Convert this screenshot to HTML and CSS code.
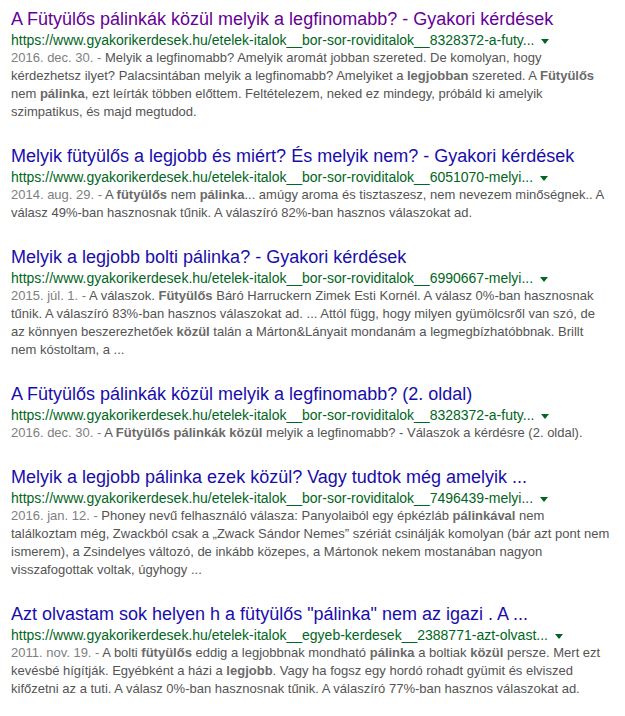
FILE: index.html
```
<html>
<head>
	<title>fütyülős pálinka - Keresés</title>
	<meta charset="utf-8">
	<link rel="stylesheet" href="styles.css">
</head>
<body>
<div id="results">

<div class="result">
	<h3 class="r"><a href="#" class="visited">A Fütyülős pálinkák közül melyik a legfinomabb? - Gyakori kérdések</a></h3>
	<div class="url-line"><cite>https://www.gyakorikerdesek.hu/etelek-italok__bor-sor-roviditalok__8328372-a-futy...</cite><span class="arrow"></span></div>
	<div class="st"><span class="date">2016. dec. 30. - </span>Melyik a legfinomabb? Amelyik aromát jobban szereted. De komolyan, hogy kérdezhetsz ilyet? Palacsintában melyik a legfinomabb? Amelyiket a <b>legjobban</b> szereted. A <b>Fütyülős</b> nem <b>pálinka</b>, ezt leírták többen előttem. Feltételezem, neked ez mindegy, próbáld ki amelyik szimpatikus, és majd megtudod.</div>
</div>

<div class="result">
	<h3 class="r"><a href="#">Melyik fütyülős a legjobb és miért? És melyik nem? - Gyakori kérdések</a></h3>
	<div class="url-line"><cite>https://www.gyakorikerdesek.hu/etelek-italok__bor-sor-roviditalok__6051070-melyi...</cite><span class="arrow"></span></div>
	<div class="st"><span class="date">2014. aug. 29. - </span>A <b>fütyülős</b> nem <b>pálinka</b>... amúgy aroma és tisztaszesz, nem nevezem minőségnek.. A válasz 49%-ban hasznosnak tűnik. A válaszíró 82%-ban hasznos válaszokat ad.</div>
</div>

<div class="result">
	<h3 class="r"><a href="#">Melyik a legjobb bolti pálinka? - Gyakori kérdések</a></h3>
	<div class="url-line"><cite>https://www.gyakorikerdesek.hu/etelek-italok__bor-sor-roviditalok__6990667-melyi...</cite><span class="arrow"></span></div>
	<div class="st"><span class="date">2015. júl. 1. - </span>A válaszok. <b>Fütyülős</b> Báró Harruckern Zimek Esti Kornél. A válasz 0%-ban hasznosnak tűnik. A válaszíró 83%-ban hasznos válaszokat ad. ... Attól függ, hogy milyen gyümölcsről van szó, de az könnyen beszerezhetőek <b>közül</b> talán a Márton&amp;Lányait mondanám a legmegbízhatóbbnak. Brillt nem kóstoltam, a ...</div>
</div>

<div class="result">
	<h3 class="r"><a href="#">A Fütyülős pálinkák közül melyik a legfinomabb? (2. oldal)</a></h3>
	<div class="url-line"><cite>https://www.gyakorikerdesek.hu/etelek-italok__bor-sor-roviditalok__8328372-a-futy...</cite><span class="arrow"></span></div>
	<div class="st"><span class="date">2016. dec. 30. - </span>A <b>Fütyülős pálinkák közül</b> melyik a legfinomabb? - Válaszok a kérdésre (2. oldal).</div>
</div>

<div class="result">
	<h3 class="r"><a href="#">Melyik a legjobb pálinka ezek közül? Vagy tudtok még amelyik ...</a></h3>
	<div class="url-line"><cite>https://www.gyakorikerdesek.hu/etelek-italok__bor-sor-roviditalok__7496439-melyi...</cite><span class="arrow"></span></div>
	<div class="st"><span class="date">2016. jan. 12. - </span>Phoney nevű felhasználó válasza: Panyolaiból egy épkézláb <b>pálinkával</b> nem találkoztam még, Zwackból csak a „Zwack Sándor Nemes” szériát csinálják komolyan (bár azt pont nem ismerem), a Zsindelyes változó, de inkább közepes, a Mártonok nekem mostanában nagyon visszafogottak voltak, úgyhogy ...</div>
</div>

<div class="result">
	<h3 class="r"><a href="#">Azt olvastam sok helyen h a fütyülős "pálinka" nem az igazi . A ...</a></h3>
	<div class="url-line"><cite>https://www.gyakorikerdesek.hu/etelek-italok__egyeb-kerdesek__2388771-azt-olvast...</cite><span class="arrow"></span></div>
	<div class="st"><span class="date">2011. nov. 19. - </span>A bolti <b>fütyülős</b> eddig a legjobbnak mondható <b>pálinka</b> a boltiak <b>közül</b> persze. Mert ezt kevésbé hígítják. Egyébként a házi a <b>legjobb</b>. Vagy ha fogsz egy hordó rohadt gyümit és elviszed kifőzetni az a tuti. A válasz 0%-ban hasznosnak tűnik. A válaszíró 77%-ban hasznos válaszokat ad.</div>
</div>

</div>
</body>
</html>
```

FILE: styles.css
```
body {
	margin: 0;
	background: #fff;
	font-family: "Liberation Sans", Arial, sans-serif;
}

#results {
	padding: 7px 12px 0 11px;
	max-width: 600px;
}

.result {
	margin-bottom: 23px;
}

h3.r {
	margin: 0;
	font-size: 18px;
	font-weight: normal;
	line-height: 24px;
	white-space: nowrap;
}

h3.r a {
	color: #1a0dab;
	text-decoration: none;
}

h3.r a.visited {
	color: #609;
}

.url-line {
	font-size: 14px;
	line-height: 18px;
	height: 18px;
	white-space: nowrap;
}

.url-line cite {
	color: #006621;
	font-style: normal;
}

.arrow {
	display: inline-block;
	margin-left: 7px;
	vertical-align: middle;
	border-top: 5px solid #006621;
	border-left: 4px solid transparent;
	border-right: 4px solid transparent;
	width: 0;
	height: 0;
}

.st {
	font-size: 13px;
	line-height: 18px;
	color: #545454;
}

.st b {
	color: #6a6a6a;
}

.date {
	color: #808080;
}
```
